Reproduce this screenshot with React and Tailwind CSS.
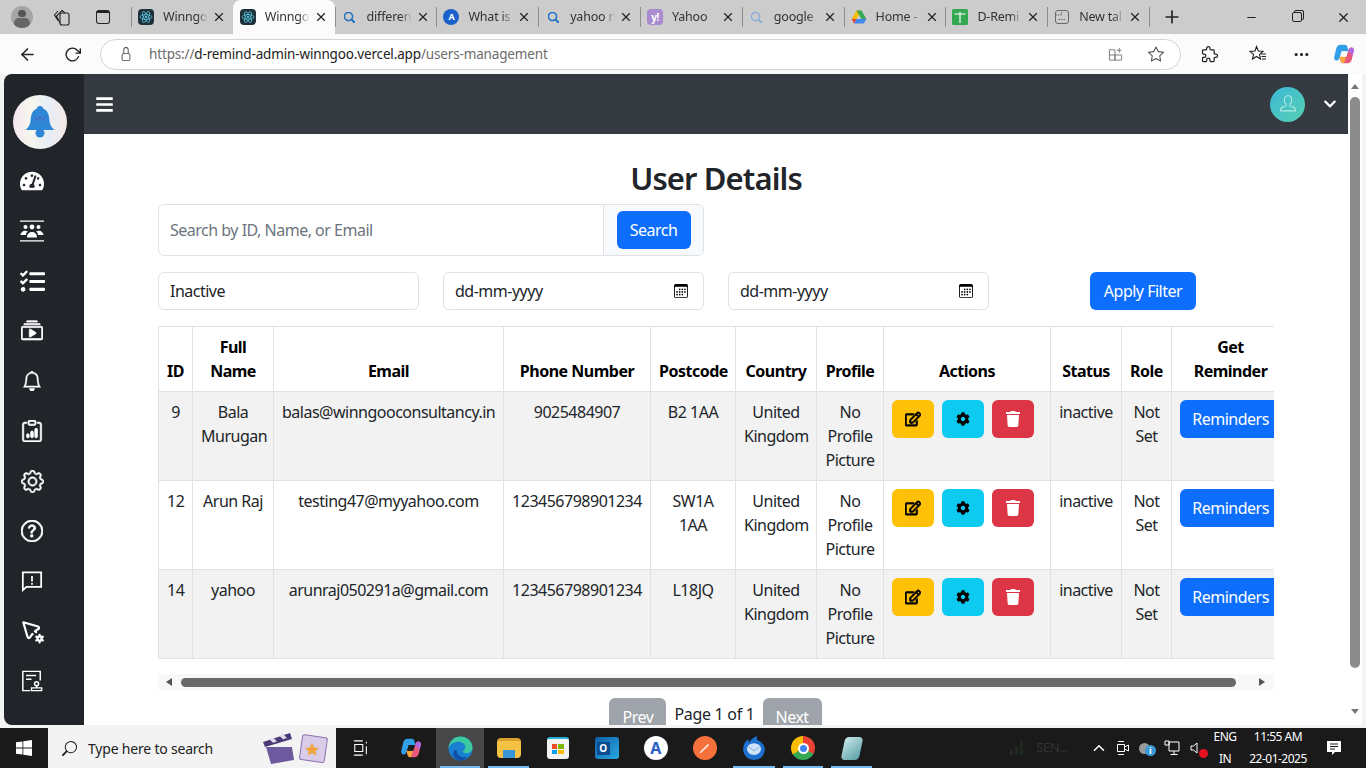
import React from "react";
import { FaBars, FaChevronDown, FaCog, FaRegEdit, FaTachometerAlt, FaTrash, FaTasks } from "react-icons/fa";
import { BsBell, BsClipboardData, BsCollectionPlay, BsGear, BsQuestionCircle, BsCalendar3, BsSearch, BsThreeDots, BsStar, BsLock } from "react-icons/bs";
import { TbPointerCog, TbPuzzle } from "react-icons/tb";
import { FiArrowLeft, FiRotateCw, FiX, FiPlus, FiMinus, FiChevronUp } from "react-icons/fi";

const USERS = [
  { id: 9, name: "Bala Murugan", email: "balas@winngooconsultancy.in", phone: "9025484907", post: "B2 1AA" },
  { id: 12, name: "Arun Raj", email: "testing47@myyahoo.com", phone: "123456798901234", post: "SW1A 1AA" },
  { id: 14, name: "yahoo", email: "arunraj050291a@gmail.com", phone: "123456798901234", post: "L18JQ" },
];

const ReactIcon = () => (
  <svg viewBox="0 0 16 16" className="w-4 h-4 rounded-sm bg-[#20303a]">
    <g fill="none" stroke="#58c4dc" strokeWidth="0.8">
      <ellipse cx="8" cy="8" rx="6" ry="2.4" />
      <ellipse cx="8" cy="8" rx="6" ry="2.4" transform="rotate(60 8 8)" />
      <ellipse cx="8" cy="8" rx="6" ry="2.4" transform="rotate(120 8 8)" />
    </g>
    <circle cx="8" cy="8" r="1.2" fill="#58c4dc" />
  </svg>
);

const SearchFav = ({ light }) => (
  <BsSearch className={light ? "w-[11px] h-[11px] text-[#7aa7d8] stroke-[0.6]" : "w-[11px] h-[11px] text-[#1a6fc4] stroke-[1.2]"} />
);

const DriveIcon = () => (
  <svg viewBox="0 0 16 16" className="w-4 h-4">
    <path d="M5.5 1.5h5L5.5 10H.7z" fill="#fbbc04" />
    <path d="M10.5 1.5l4.8 8.5h-5L5.5 1.5z" fill="#34a853" />
    <path d="M3 14.5L5.5 10h9.8l-2.4 4.5z" fill="#4285f4" />
    <path d="M.7 10h4.8L3 14.5z" fill="#ea4335" />
  </svg>
);

const CopilotIcon = ({ hole }) => (
  <svg viewBox="0 0 24 24" className="w-[22px] h-[22px]">
    <path d="M8 2h5c1.500 0 2.300 1 2.700 2.300L17 9H9.500L7 16.500C6.500 18 5.500 19 4 19c-2 0-3-1.500-2.700-3.500L3.500 6C4.200 3.500 5.800 2 8 2z" fill="#2f9fe8" />
    <path d="M16 22h-5c-1.500 0-2.300-1-2.700-2.300L7 15h7.500L17 7.500C17.500 6 18.500 5 20 5c2 0 3 1.500 2.700 3.500L20.500 18c-.7 2.500-2.300 4-4.500 4z" fill="#e8587c" />
    <path d="M17 7.500C17.500 6 18.500 5 20 5c2 0 3 1.500 2.700 3.500L21.500 14 17 9z" fill="#b06ae0" />
    <path d="M7 15H14l-1 4.500c-.5 1.500-1.300 2.500-2 2.500-1.500 0-2.300-1-2.700-2.300z" fill="#f6a53a" />
    <path d="M9.500 9H15l-1 6H8z" fill={hole} />
  </svg>
);

const TABS = [
  { title: "Winngo", icon: <ReactIcon /> },
  { title: "Winngo", icon: <ReactIcon />, active: true },
  { title: "differen", icon: <SearchFav /> },
  {
    title: "What is",
    icon: <span className="w-4 h-4 rounded-full bg-[#1a62c9] text-white text-[9px] font-bold flex items-center justify-center">A</span>,
  },
  { title: "yahoo n", icon: <SearchFav /> },
  {
    title: "Yahoo",
    icon: <span className="w-4 h-4 rounded-sm bg-[#a98bd0] text-white text-[10px] font-bold flex items-center justify-center">y!</span>,
  },
  { title: "google", icon: <SearchFav light /> },
  { title: "Home -", icon: <DriveIcon /> },
  {
    title: "D-Remi",
    icon: (
      <svg viewBox="0 0 16 16" className="w-4 h-4">
        <rect width="16" height="16" rx="1.5" fill="#34a853" />
        <path d="M2.500 5h11M8 3v11" stroke="#fff" strokeWidth="1.2" />
      </svg>
    ),
  },
  {
    title: "New tal",
    icon: (
      <svg viewBox="0 0 16 16" className="w-4 h-4" fill="none" stroke="#666" strokeWidth="1">
        <rect x="1.5" y="1.5" width="13" height="13" rx="2.5" />
        <path d="M1.5 6h6V1.5M4.500 10.500h7" strokeDasharray="1.5 1" />
      </svg>
    ),
  },
];

function Tab({ title, icon, active }) {
  return (
    <div
      className={`w-[101.8px] h-[34px] shrink-0 flex items-center pl-[7px] relative ${
        active ? "bg-[#fbfbfb] rounded-t-lg" : ""
      }`}
    >
      {!active && <span className="absolute left-0 top-[7px] w-px h-[20px] bg-[#8f8f8f]" />}
      <span className="w-4 h-4 shrink-0 flex items-center justify-center">{icon}</span>
      <span className="ml-[9px] w-[45px] overflow-hidden whitespace-nowrap text-[12.5px] tracking-[-0.2px] text-[#333] [mask-image:linear-gradient(90deg,#000_75%,transparent)]">
        {title}
      </span>
      <FiX className="absolute left-[81px] top-[10px] w-[14px] h-[14px] text-[#222]" />
    </div>
  );
}

function BrowserChrome() {
  return (
    <div className="shrink-0">
      <div className="h-[34px] bg-[#cccccc] flex items-center">
        <div className="w-[44px] flex justify-center">
          <span className="w-[22px] h-[22px] rounded-full bg-[#a5a5a5] overflow-hidden flex flex-col items-center">
            <span className="w-2 h-2 rounded-full bg-[#555] mt-[4px]" />
            <span className="w-4 h-3 rounded-full bg-[#666] mt-[1px]" />
          </span>
        </div>
        <div className="w-[36px] flex justify-center">
          <svg viewBox="0 0 18 18" className="w-[18px] h-[18px]" fill="none" stroke="#222" strokeWidth="1.1">
            <rect x="7" y="5" width="9" height="12" rx="2" />
            <path d="M7 15L3.500 8 9 2.500l3 2.500M5 12.500L1.500 7 5 3" />
          </svg>
        </div>
        <div className="w-[46px] flex justify-center">
          <span className="w-[14px] h-[14px] rounded-[3px] border-[1.5px] border-[#222] border-t-[3px]" />
        </div>
        <div className="ml-[5px] flex">
          {TABS.map((t, i) => (
            <Tab key={i} {...t} />
          ))}
        </div>
        <div className="w-px h-[20px] bg-[#8f8f8f]" />
        <div className="w-[44px] flex justify-center">
          <FiPlus className="w-[20px] h-[20px] text-[#222]" />
        </div>
        <div className="flex-1" />
        <div className="w-[46px] flex justify-center">
          <FiMinus className="w-[13px] h-[13px] text-[#222]" />
        </div>
        <div className="w-[46px] flex justify-center">
          <span className="w-[10px] h-[10px] border border-[#222] rounded-[2px] shadow-[2px_-2px_0_-1px_#cccccc,2px_-2px_0_0_#222]" />
        </div>
        <div className="w-[46px] flex justify-center">
          <FiX className="w-[15px] h-[15px] text-[#222]" />
        </div>
      </div>
      <div className="h-[40px] bg-[#fbfbfb] flex items-center">
        <div className="w-[54px] flex justify-center">
          <FiArrowLeft className="w-[19px] h-[19px] text-[#222]" />
        </div>
        <div className="w-[36px] flex justify-center">
          <FiRotateCw className="w-[17px] h-[17px] text-[#222]" />
        </div>
        <div className="ml-[10px] w-[1081px] h-[31px] rounded-full bg-white border border-[#d4d4d4] flex items-center text-[13.5px] tracking-[-0.15px]">
          <BsLock className="ml-[18px] w-[14px] h-[14px] text-[#444]" />
          <span className="ml-[16px] text-[#6b6b6b]">https://</span>
          <span className="text-[#222]">d-remind-admin-winngoo.vercel.app</span>
          <span className="text-[#6b6b6b]">/users-management</span>
          <span className="flex-1" />
          <svg viewBox="0 0 16 16" className="w-[15px] h-[15px] mr-[25px]" fill="none" stroke="#777" strokeWidth="1">
            <path d="M1.5 3h6v11h-6zM7.500 8.500h7V14h-7zM1.500 8.500h6M12 1v5M9.500 3.500h5" />
          </svg>
          <BsStar className="w-[16px] h-[16px] mr-[16px] text-[#555]" />
        </div>
        <div className="w-[58px] flex justify-center">
          <TbPuzzle className="w-[20px] h-[20px] text-[#222] stroke-[1.5]" />
        </div>
        <div className="w-[38px] flex justify-center relative">
          <svg viewBox="0 0 18 18" className="w-[18px] h-[18px]" fill="none" stroke="#222" strokeWidth="1.1">
            <path d="M7.500 1.500l1.900 4.500 4.600.4-3.500 3 1 4.600-4-2.500-4 2.500 1-4.600-3.500-3L6 6zM12 9h5M12.500 11.500h4.500M13 14h4" />
          </svg>
        </div>
        <div className="w-[48px] flex justify-center">
          <BsThreeDots className="w-[17px] h-[17px] text-[#222]" />
        </div>
        <div className="w-[38px] flex justify-center">
          <CopilotIcon hole="#fbfbfb" />
        </div>
      </div>
    </div>
  );
}

const TeamIcon = () => (
  <svg viewBox="0 0 26 24" className="w-[26px] h-[24px]" fill="#fff">
    <path d="M1 1.500h24v1.300H1zM1 21.200h24v1.300H1z" />
    <circle cx="13" cy="8" r="2.400" />
    <circle cx="6.500" cy="8" r="2" />
    <circle cx="19.500" cy="8" r="2" />
    <path d="M8 18.500c0-3.400 2-5.500 5-5.500s5 2.100 5 5.500zM1.500 16c.3-2.700 2.200-4.300 4.800-4.300 1 0 1.800.2 2.500.6-1 .8-1.600 2-1.900 3.700zM24.500 16c-.3-2.700-2.200-4.300-4.800-4.300-1 0-1.800.2-2.500.6 1 .8 1.600 2 1.900 3.700z" />
  </svg>
);

const FeedbackIcon = () => (
  <svg viewBox="0 0 24 24" className="w-[22px] h-[22px]" fill="none" stroke="#fff" strokeWidth="1.9">
    <path d="M2 2.500h20v16H6l-4 3.500z" />
    <path d="M12 6.500v6M12 14.200v1.800" />
  </svg>
);

const StampFileIcon = () => (
  <svg viewBox="0 0 24 24" className="w-[22px] h-[22px]" fill="none" stroke="#fff" strokeWidth="1.6">
    <path d="M10 22.500H2V1.500h19v10" />
    <path d="M5.500 6h11M5.500 10h6" />
    <circle cx="17" cy="15" r="2.200" />
    <path d="M11.500 19.500h11v3h-11zM17 17v2.500" />
  </svg>
);

const SIDE_ICONS = [
  <FaTachometerAlt className="w-[24px] h-[24px]" />,
  <TeamIcon />,
  <FaTasks className="w-[25px] h-[25px]" />,
  <BsCollectionPlay className="w-[22px] h-[22px] stroke-[0.5]" />,
  <BsBell className="w-[20px] h-[20px] stroke-[0.4]" />,
  <BsClipboardData className="w-[22px] h-[22px] stroke-[0.5]" />,
  <BsGear className="w-[23px] h-[23px] stroke-[0.4]" />,
  <BsQuestionCircle className="w-[22px] h-[22px] stroke-[0.5]" />,
  <FeedbackIcon />,
  <TbPointerCog className="w-[26px] h-[26px]" />,
  <StampFileIcon />,
];

function Sidebar() {
  return (
    <aside className="w-[80px] shrink-0 bg-[#212529] rounded-l-lg text-white">
      <div className="pt-[21px] pl-[9px]">
        <div className="w-[54px] h-[54px] rounded-full bg-[linear-gradient(90deg,#f5e6ee,#f6f6ee,#e6eef6,#f5e9e4)] flex items-center justify-center">
          <svg viewBox="0 0 30 34" className="w-[30px] h-[34px]">
            <path d="M15 1c2 0 3 1 3.200 2.800C23 5.500 24 10 24.500 16c.3 4 2 6.500 5 9H.5c3-2.500 4.700-5 5-9C6 10 7 5.500 11.800 3.800 12 2 13 1 15 1z" fill="#2f86d6" />
            <circle cx="15" cy="28" r="4.500" fill="#2f86d6" />
            <path d="M9.500 11l3 5 2.500-4 2.500 4 3-5" fill="none" stroke="#5b5fb0" strokeWidth="1" />
          </svg>
        </div>
      </div>
      <div className="mt-[7px] flex flex-col">
        {SIDE_ICONS.map((icon, i) => (
          <div key={i} className="h-[50px] w-[56px] flex items-center justify-center">
            {icon}
          </div>
        ))}
      </div>
    </aside>
  );
}

function ActionButton({ bg, children }) {
  return <button className={`w-[42px] h-[38px] rounded-md flex items-center justify-center ${bg}`}>{children}</button>;
}

function UserTable() {
  const th = "border border-[#dee2e6] px-2 py-2 font-bold align-bottom text-center text-black";
  const td = "border border-[#dee2e6] px-2 py-2 align-top text-center text-[#212529]";
  return (
    <div className="mt-4 w-[1116px] overflow-hidden">
      <table className="w-[1131px] table-fixed border-collapse text-base leading-6">
        <colgroup>
          <col className="w-[34px]" />
          <col className="w-[81px]" />
          <col className="w-[230px]" />
          <col className="w-[147px]" />
          <col className="w-[85px]" />
          <col className="w-[81px]" />
          <col className="w-[67px]" />
          <col className="w-[167px]" />
          <col className="w-[71px]" />
          <col className="w-[50px]" />
          <col className="w-[118px]" />
        </colgroup>
        <thead>
          <tr className="h-[65px]">
            <th className={th}>ID</th>
            <th className={th}>Full Name</th>
            <th className={th}>Email</th>
            <th className={th}>Phone Number</th>
            <th className={th}>Postcode</th>
            <th className={th}>Country</th>
            <th className={th}>Profile</th>
            <th className={th}>Actions</th>
            <th className={th}>Status</th>
            <th className={th}>Role</th>
            <th className={th}>Get Reminder</th>
          </tr>
        </thead>
        <tbody>
          {USERS.map((u, i) => (
            <tr key={u.id} className={`h-[89px] ${i % 2 === 0 ? "bg-[#f2f2f2]" : "bg-white"}`}>
              <td className={td}>{u.id}</td>
              <td className={td}>{u.name}</td>
              <td className={`${td} whitespace-nowrap`}>{u.email}</td>
              <td className={`${td} whitespace-nowrap`}>{u.phone}</td>
              <td className={td}>{u.post}</td>
              <td className={td}>United Kingdom</td>
              <td className={td}>No Profile Picture</td>
              <td className={td}>
                <div className="flex gap-2">
                  <ActionButton bg="bg-[#ffc107]">
                    <FaRegEdit className="w-4 h-4 text-black stroke-[30]" />
                  </ActionButton>
                  <ActionButton bg="bg-[#0dcaf0]">
                    <FaCog className="w-[14px] h-[14px] text-black" />
                  </ActionButton>
                  <ActionButton bg="bg-[#dc3545]">
                    <FaTrash className="w-[14px] h-4 text-white" />
                  </ActionButton>
                </div>
              </td>
              <td className={td}>inactive</td>
              <td className={td}>Not Set</td>
              <td className={td}>
                <button className="h-[38px] w-[101px] rounded-md bg-[#0d6efd] text-white">Reminders</button>
              </td>
            </tr>
          ))}
        </tbody>
      </table>
    </div>
  );
}

function Content() {
  return (
    <div className="flex-1 min-w-0 flex flex-col overflow-hidden">
      <header className="h-[60px] shrink-0 bg-[#343a40] flex items-center text-white">
        <FaBars className="ml-[11px] w-[19px] h-[19px]" />
        <span className="flex-1" />
        <span className="w-[35px] h-[35px] rounded-full bg-[linear-gradient(135deg,#3cb8d8,#56d0b0)] flex items-center justify-center">
          <svg viewBox="0 0 24 24" className="w-[22px] h-[22px]" fill="none" stroke="#b5ece4" strokeWidth="1.1">
            <path d="M12 3c2.700 0 4 2 4 4.500 0 2-.9 3.700-2 4.700v1.300c0 1 4.500 1.500 6 3.500v2.500H4V17c1.500-2 6-2.500 6-3.500v-1.300c-1.100-1-2-2.700-2-4.700C8 5 9.300 3 12 3z" />
          </svg>
        </span>
        <FaChevronDown className="ml-[18px] mr-[11px] w-[14px] h-[14px]" />
      </header>
      <main className="flex-1 bg-white px-[74px] text-[#212529] overflow-hidden">
        <h2 className="mt-[25px] text-[31px] leading-[38px] font-semibold text-center tracking-[-0.9px]">User Details</h2>
        <div className="mt-[7px] flex w-[546px] h-[52px] border border-[#dee2e6] rounded-md">
          <div className="flex-1 pl-[11px] flex items-center text-[#6c757d] border-r border-[#dee2e6]">Search by ID, Name, or Email</div>
          <div className="w-[99px] bg-[#f8f9fa] flex items-center justify-center rounded-r-md">
            <button className="w-[74px] h-[38px] rounded-md bg-[#0d6efd] text-white">Search</button>
          </div>
        </div>
        <div className="mt-4 flex items-center h-[38px]">
          <div className="w-[261px] h-full border border-[#dee2e6] rounded-md pl-[11px] flex items-center">Inactive</div>
          {[0, 1].map((k) => (
            <div key={k} className="ml-6 w-[261px] h-full border border-[#dee2e6] rounded-md pl-[11px] pr-[15px] flex items-center justify-between">
              dd-mm-yyyy
              <BsCalendar3 className="w-[14px] h-[14px] text-black" />
            </div>
          ))}
          <button className="ml-[101px] w-[106px] h-[38px] rounded-md bg-[#0d6efd] text-white">Apply Filter</button>
        </div>
        <UserTable />
        <div className="mt-[15px] w-[1116px] h-4 bg-[#f8f8f8] flex items-center">
          <span className="ml-[8px] w-0 h-0 border-y-[4px] border-y-transparent border-r-[6px] border-r-[#555]" />
          <span className="ml-[9px] w-[1055px] h-[9px] rounded-full bg-[#686868]" />
          <span className="ml-[23px] w-0 h-0 border-y-[4px] border-y-transparent border-l-[6px] border-l-[#555]" />
        </div>
        <div className="mt-[8px] flex items-start justify-center pr-[1px]">
          <button className="w-[57px] h-[38px] rounded-md bg-[#9fa4aa] text-white">Prev</button>
          <span className="mx-2 leading-[32px] tracking-[-0.3px]">Page 1 of 1</span>
          <button className="w-[59px] h-[38px] rounded-md bg-[#9fa4aa] text-white">Next</button>
        </div>
      </main>
    </div>
  );
}

function PageScrollbar() {
  return (
    <div className="w-[14px] shrink-0 bg-white flex flex-col items-start pl-[2px]">
      <span className="mt-[10px] w-0 h-0 ml-[1px] border-x-[4px] border-x-transparent border-b-[5px] border-b-[#777]" />
      <span className="mt-[8px] w-[10px] h-[571px] rounded-full bg-[#8c8c8c]" />
      <span className="mt-[41px] w-0 h-0 ml-[1px] border-x-[4px] border-x-transparent border-t-[5px] border-t-[#777]" />
    </div>
  );
}

const Slot = ({ w, active, line, children }) => (
  <div className={`h-full shrink-0 flex items-center justify-center relative ${w} ${active ? "bg-[#474747]" : ""}`}>
    {children}
    {line && <span className="absolute bottom-0 left-[4px] right-[4px] h-[2px] bg-[#76b9ed]" />}
  </div>
);

function Taskbar() {
  return (
    <div className="h-[40px] shrink-0 bg-[#1a1a1a] flex items-center text-white">
      <Slot w="w-[48px]">
        <svg viewBox="0 0 16 16" className="w-4 h-4" fill="#fff">
          <path d="M0 2.300l6.500-.9v6.200H0zM7.300 1.300L16 0v7.600H7.300zM0 8.400h6.500v6.200L0 13.700zM7.300 8.400H16V16l-8.700-1.200z" />
        </svg>
      </Slot>
      <div className="w-[288px] h-full bg-[#f3f3f3] flex items-center text-[#222] pl-[14px]">
        <BsSearch className="w-[15px] h-[15px] -scale-x-100 text-[#222]" />
        <span className="ml-[11px] text-[14px] tracking-[-0.2px]">Type here to search</span>
        <span className="flex-1" />
        <svg viewBox="0 0 68 34" className="w-[68px] h-[36px] mr-[7px]">
          <path d="M2 11l27-9 2 6-27 8z" fill="#4b3a78" />
          <path d="M8 8l4-1.500 4 4-4 1.200zM18 4.500l4-1.500 4 4-4 1.200z" fill="#e0dcea" />
          <path d="M5 16h26l2 13-23 4z" fill="#6d5a9e" />
          <rect x="40" y="5" width="25" height="25" rx="2" fill="#d9cce8" stroke="#8a72b0" transform="rotate(8 52 17)" />
          <path d="M51 12l2.200 4.500 4.800.5-3.600 3 1 4.600-4.400-2.400-4.400 2.400 1-4.600-3.600-3 4.800-.5z" fill="#f2a33a" />
        </svg>
      </div>
      <Slot w="w-[50px]">
        <svg viewBox="0 0 18 18" className="w-4 h-4" fill="none" stroke="#fff" strokeWidth="1.2">
          <path d="M1 1h10M1 17h10M2 5h9v8H2zM15 2v2M15 7v9" />
        </svg>
      </Slot>
      <Slot w="w-[50px]">
        <CopilotIcon hole="#1a1a1a" />
      </Slot>
      <Slot w="w-[48px]" active line>
        <svg viewBox="0 0 24 24" className="w-[25px] h-[25px]">
          <circle cx="12" cy="12" r="11.500" fill="#1a7fd0" />
          <path d="M.5 12C1 5 6 .5 12 .5c6.500 0 11.500 5 11.500 10.500 0 3.500-3 5.500-6 5.500-2 0-3.500-.8-3.500-1.800 2-1 2.500-2.500 2.500-4 0-3-3-5.200-6-5.200-4.500 0-9 2.500-10 6.500z" fill="#3ac9a0" />
          <path d="M8 13c0 4 3 7.500 8 7.500 1 0 2-.2 3-.7-2 2.500-4.500 3.700-7 3.700-4 0-7-3-7-6.500 0-2 1.200-3.500 3-4z" fill="#0f4fa8" />
        </svg>
      </Slot>
      <Slot w="w-[49px]" line>
        <span className="w-[24px] h-[20px] rounded-sm bg-[#f6c244] flex items-end justify-center border-t-[3px] border-[#d9a02c]">
          <span className="w-[12px] h-[8px] bg-[#3a94d8]" />
        </span>
      </Slot>
      <Slot w="w-[49px]">
        <span className="w-[22px] h-[22px] rounded-[3px] bg-[#f3f3f3] grid grid-cols-2 gap-px p-[5px] border-t-2 border-[#2ab0d8]">
          <span className="bg-[#f25022]" />
          <span className="bg-[#7fba00]" />
          <span className="bg-[#00a4ef]" />
          <span className="bg-[#ffb900]" />
        </span>
      </Slot>
      <Slot w="w-[49px]">
        <span className="w-[24px] h-[22px] rounded-[3px] bg-[linear-gradient(135deg,#0f5fa8,#28a8e0)] flex items-center pl-[2px]">
          <span className="w-[13px] h-[13px] bg-[#0a4d92] text-white text-[10px] font-bold flex items-center justify-center">O</span>
        </span>
      </Slot>
      <Slot w="w-[49px]">
        <span className="w-[24px] h-[24px] rounded-full bg-white text-[#2a62c9] text-[16px] font-bold flex items-center justify-center">A</span>
      </Slot>
      <Slot w="w-[49px]">
        <span className="w-[24px] h-[24px] rounded-full bg-[#f5703a] flex items-center justify-center">
          <svg viewBox="0 0 16 16" className="w-[14px] h-[14px]" fill="none" stroke="#fff" strokeWidth="1.6">
            <path d="M2.500 13.500L12 4" />
          </svg>
        </span>
      </Slot>
      <Slot w="w-[50px]" line>
        <svg viewBox="0 0 24 24" className="w-[26px] h-[26px]">
          <path d="M12 23C6 23 2 18.500 2 13 2 9 4 5.500 7 3.500 6.500 5 6.800 6 7.500 7 9 4 12 2 15 1c-.6 1.500-.5 2.500 0 3.500 4 1.500 7 5 7 8.500 0 5.500-4 10-10 10z" fill="#1d6fd0" />
          <ellipse cx="12" cy="13" rx="6.500" ry="5.500" fill="#cfe4f8" />
          <path d="M7 11l5 3.500 5-3.500" fill="none" stroke="#8fb8e0" strokeWidth="1" />
        </svg>
      </Slot>
      <Slot w="w-[48px]" line>
        <span className="w-[24px] h-[24px] rounded-full bg-[conic-gradient(#ea4335_0_33%,#34a853_33%_66%,#fbbc04_66%_100%)] flex items-center justify-center">
          <span className="w-[7px] h-[7px] rounded-full bg-[#4285f4] border-2 border-white box-content" />
        </span>
      </Slot>
      <Slot w="w-[49px]" line>
        <span className="w-[18px] h-[23px] -skew-x-12 rounded-sm bg-[linear-gradient(135deg,#c8e8e8,#5aa0a8)]" />
      </Slot>
      <div className="w-[211px] flex items-center justify-end pr-[19px] text-[#333] text-[13px]">
        <svg viewBox="0 0 20 20" className="w-[20px] h-[20px] mr-[8px]" fill="#1f2a1f">
          <path d="M2 17h3v-5H2zM7 17h3V8H7zM12 17h3V3h-3z" />
        </svg>
        SEN...
      </div>
      <div className="w-[24px] flex justify-center">
        <FiChevronUp className="w-[18px] h-[18px]" />
      </div>
      <div className="w-[24px] flex justify-center">
        <svg viewBox="0 0 16 16" className="w-4 h-4" fill="none" stroke="#fff" strokeWidth="1">
          <path d="M3 1.500h6M3 14.500h6M2.500 4.500h7v7h-7zM9.500 7l4-2v6l-4-2" />
        </svg>
      </div>
      <div className="w-[24px] flex justify-center relative">
        <span className="absolute left-[4px] top-[2px] w-[11px] h-[11px] rounded-full bg-[#9a9a9a]" />
        <span className="relative ml-[6px] mt-[4px] w-[11px] h-[11px] rounded-full bg-[#3a9ad9] text-[9px] leading-[11px] font-bold text-center">i</span>
      </div>
      <div className="w-[25px] flex justify-center">
        <svg viewBox="0 0 16 16" className="w-4 h-4" fill="none" stroke="#fff" strokeWidth="1">
          <path d="M5 2h10v9H5zM10 11v3M6.500 14.500h7M1 1h4v4H1z" />
        </svg>
      </div>
      <div className="w-[26px] flex justify-center relative">
        <svg viewBox="0 0 16 16" className="w-4 h-4" fill="none" stroke="#fff" strokeWidth="1">
          <path d="M2 6v4h2.500L8 13V3L4.500 6z" />
        </svg>
        <span className="absolute right-[2px] bottom-[-2px] w-[9px] h-[9px] rounded-full bg-[#e81123]" />
      </div>
      <div className="w-[30px] flex flex-col items-center text-[12px] leading-[22px]">
        <span>ENG</span>
        <span>IN</span>
      </div>
      <div className="w-[76px] flex flex-col items-center text-[12px] leading-[22px]">
        <span>11:55 AM</span>
        <span>22-01-2025</span>
      </div>
      <div className="flex-1 flex justify-center pr-[14px]">
        <svg viewBox="0 0 16 16" className="w-4 h-4" fill="#fff">
          <path d="M1 1h14v11H9l-3 3v-3H1z" />
          <path d="M4 4h8M4 6.500h8M4 9h5" stroke="#1a1a1a" />
        </svg>
      </div>
    </div>
  );
}

export default function App() {
  return (
    <div className="h-screen overflow-hidden flex flex-col bg-[#f3f3f3] font-['Noto_Sans','Segoe_UI',sans-serif] tracking-[-0.5px]">
      <BrowserChrome />
      <div className="h-[651px] shrink-0 flex pl-[4px] pr-[4px]">
        <Sidebar />
        <Content />
        <PageScrollbar />
      </div>
      <div className="flex-1" />
      <Taskbar />
    </div>
  );
}
